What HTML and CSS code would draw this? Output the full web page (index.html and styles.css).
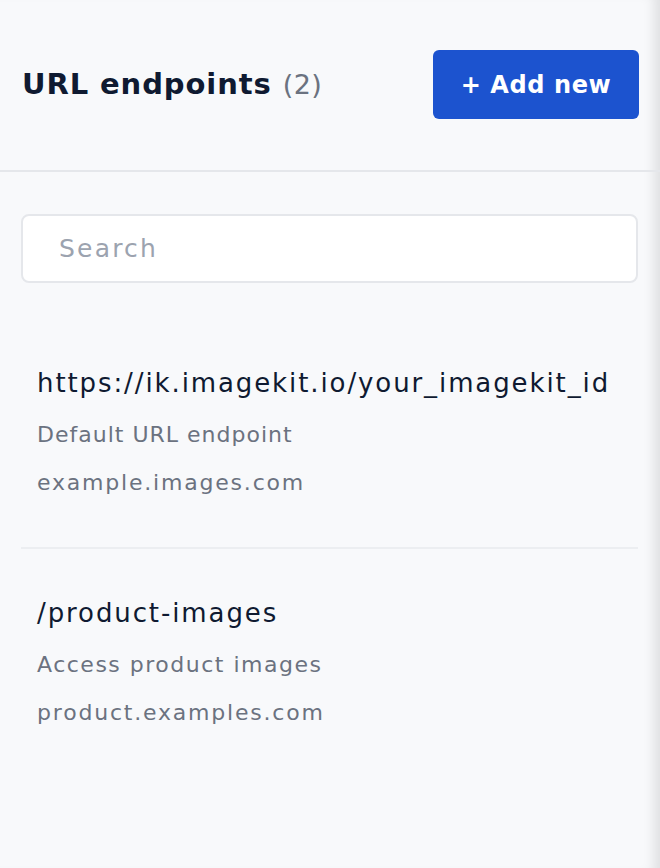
FILE: index.html
```html
<!DOCTYPE html>
<html lang="en">
<head>
<meta charset="utf-8">
<title>URL endpoints</title>
<link rel="stylesheet" href="styles.css">
</head>
<body>
<div class="page">
  <header class="header">
    <h1 class="title">URL endpoints <span class="count">(2)</span></h1>
    <button class="add-btn" type="button">+ Add new</button>
  </header>
  <div class="search-wrap">
    <input class="search" type="text" placeholder="Search">
  </div>
  <ul class="list">
    <li class="item">
      <div class="item-title">https://ik.imagekit.io/your_imagekit_id</div>
      <div class="item-sub item-sub-default">Default URL endpoint</div>
      <div class="item-domain">example.images.com</div>
    </li>
    <li class="item">
      <div class="item-title">/product-images</div>
      <div class="item-sub">Access product images</div>
      <div class="item-domain">product.examples.com</div>
    </li>
  </ul>
</div>
</body>
</html>
```

FILE: styles.css
```css
* { box-sizing: border-box; }
html, body { margin: 0; padding: 0; }
body {
  background: #f8f9fb;
  font-family: "DejaVu Sans", "Open Sans", sans-serif;
  color: #0f1a31;
}
.page {
  min-height: 868px;
  background: #f8f9fb;
  box-shadow: inset -14px 0 12px -8px rgba(0, 0, 0, 0.10);
}
.header {
  display: flex;
  align-items: center;
  justify-content: space-between;
  padding: 50px 21px 51px 22px;
  border-bottom: 2px solid #e5e7eb;
}
.title {
  margin: 0;
  font-size: 29px;
  font-weight: 700;
  line-height: 40px;
  letter-spacing: 0.9px;
  color: #0f1a31;
}
.count {
  font-weight: 400;
  color: #6b7280;
  font-size: 27px;
  letter-spacing: 0.5px;
}
.add-btn {
  width: 206px;
  height: 69px;
  border: none;
  border-radius: 6px;
  background: #1c53cf;
  color: #ffffff;
  font-family: inherit;
  font-size: 24px;
  font-weight: 700;
  letter-spacing: 0.6px;
  padding: 0;
}
.search-wrap {
  padding: 42px 22px 0 21px;
}
.search {
  display: block;
  width: 100%;
  height: 69px;
  border: 2px solid #e5e7eb;
  border-radius: 8px;
  background: #ffffff;
  padding: 0 0 0 36px;
  font-family: inherit;
  font-size: 25px;
  letter-spacing: 2.2px;
  color: #0f1a31;
  outline: none;
}
.search::placeholder { color: #9ca3af; }
.list {
  list-style: none;
  margin: 36px 22px 0 21px;
  padding: 0;
}
.item {
  padding: 44px 16px 46px;
}
.item + .item {
  border-top: 2px solid #eceef1;
}
.item-title {
  font-size: 26px;
  line-height: 40px;
  letter-spacing: 1.9px;
  color: #0f1a31;
}
.item-sub {
  margin-top: 14px;
  font-size: 22px;
  line-height: 36px;
  letter-spacing: 1.5px;
  color: #6b7280;
}
.item-sub-default {
  letter-spacing: 1px;
}
.item-domain {
  margin-top: 12px;
  font-size: 22px;
  line-height: 36px;
  letter-spacing: 1.8px;
  color: #6b7280;
}
```
